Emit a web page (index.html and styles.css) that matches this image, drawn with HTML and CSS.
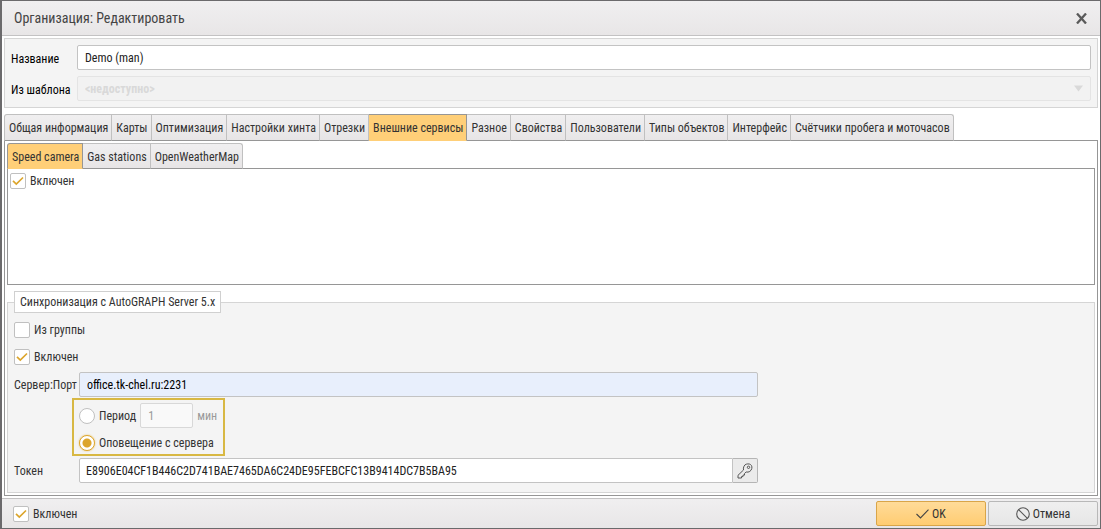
FILE: index.html
```html
<!DOCTYPE html>
<html lang="ru">
<head>
<meta charset="utf-8">
<title>Организация: Редактировать</title>
<link rel="stylesheet" href="styles.css">
</head>
<body>
<form class="dialog">
  <header class="dialog-header">
    <h1 class="dialog-title">Организация: Редактировать</h1>
    <button type="button" class="close" aria-label="Закрыть">
      <svg width="11" height="11" viewBox="0 0 11 11"><path d="M1 0.5 10 10.5M10 0.5 1 10.5" stroke="#5a5a5a" stroke-width="2.300" fill="none"/></svg>
    </button>
  </header>

  <main class="dialog-body">
    <section class="general">
      <label for="name">Название</label>
      <input class="field" id="name" type="text" value="Demo (man)">
      <label for="template">Из шаблона</label>
      <div class="select-wrap">
        <select class="field select" id="template" disabled><option>&lt;недоступно&gt;</option></select>
        <svg class="arrow" width="9" height="7" viewBox="0 0 9 7"><path d="M0 0.5h9L4.500 6.500z" fill="#d9d9d9"/></svg>
      </div>
    </section>

    <nav class="tabs">
      <button type="button" class="tab">Общая информация</button>
      <button type="button" class="tab">Карты</button>
      <button type="button" class="tab">Оптимизация</button>
      <button type="button" class="tab">Настройки хинта</button>
      <button type="button" class="tab">Отрезки</button>
      <button type="button" class="tab active">Внешние сервисы</button>
      <button type="button" class="tab">Разное</button>
      <button type="button" class="tab">Свойства</button>
      <button type="button" class="tab">Пользователи</button>
      <button type="button" class="tab">Типы объектов</button>
      <button type="button" class="tab">Интерфейс</button>
      <button type="button" class="tab">Счётчики пробега и моточасов</button>
    </nav>

    <section class="pane">
      <nav class="tabs inner">
        <button type="button" class="tab active">Speed camera</button>
        <button type="button" class="tab">Gas stations</button>
        <button type="button" class="tab">OpenWeatherMap</button>
      </nav>
      <div class="service">
        <label class="check"><input type="checkbox" checked>Включен</label>
      </div>

      <fieldset class="sync">
        <legend>Синхронизация с AutoGRAPH Server 5.x</legend>
        <label class="check"><input type="checkbox">Из группы</label>
        <label class="check"><input type="checkbox" checked>Включен</label>
        <div class="row">
          <label for="server">Сервер:Порт</label>
          <input class="field autofill" id="server" type="text" value="office.tk-chel.ru:2231">
        </div>
        <div class="mode">
          <div class="mode-row">
            <label class="radio"><input type="radio" name="mode">Период</label>
            <input class="field minutes" type="text" value="1" aria-label="Период, мин" disabled>
            <span class="unit">мин</span>
          </div>
          <label class="radio"><input type="radio" name="mode" checked>Оповещение с сервера</label>
        </div>
        <div class="row">
          <label for="token">Токен</label>
          <div class="token">
            <input class="field" id="token" type="text" value="E8906E04CF1B446C2D741BAE7465DA6C24DE95FEBCFC13B9414DC7B5BA95">
            <button type="button" class="key" aria-label="Создать токен">
              <svg width="16" height="16" viewBox="0 0 16 16" fill="none" stroke="#555" stroke-linejoin="round"><path d="M7 3.200C8 1 10.500 .7 12.300 1c2 .5 3 2.300 2.500 4.400-.5 2.600-3 4.300-5.700 3.600L7.500 10.500v1.600H6v1.500H4.500V15H1v-2.700L6.500 7C6.200 5.800 6.400 4.400 7 3.200z"/><circle cx="11.500" cy="4.300" r="1.200"/></svg>
            </button>
          </div>
        </div>
      </fieldset>
    </section>
  </main>

  <footer class="dialog-footer">
    <label class="check"><input type="checkbox" checked>Включен</label>
    <div class="actions">
      <button type="submit" class="button primary">
        <svg width="13" height="10" viewBox="0 0 13 10"><path d="M.5 5 4.500 9 12.500 .7" fill="none" stroke="#444" stroke-width="1.100"/></svg>OK
      </button>
      <button type="button" class="button">
        <svg width="14" height="14" viewBox="0 0 14 14" fill="none" stroke="#555" stroke-width="1.100"><circle cx="7" cy="7" r="6.300"/><path d="M2.600 2.600 11.400 11.400"/></svg>Отмена
      </button>
    </div>
  </footer>
</form>
</body>
</html>
```
FILE: styles.css
```css
* {
  box-sizing: border-box;
}

body {
  margin: 0;
  font: 12px/16px "Roboto Condensed", Roboto, "Liberation Sans", sans-serif;
  color: #333;
}

button,
input,
select {
  font: inherit;
  color: inherit;
  margin: 0;
}

svg {
  flex: none;
}

.dialog {
  display: flex;
  flex-direction: column;
  min-height: 100vh;
  border: 1px solid #6b6a6c;
  border-left-width: 2px;
  background: #fff;
}

.dialog-header {
  display: flex;
  align-items: center;
  justify-content: space-between;
  height: 35px;
  padding: 0 13px 0 12px;
  background: linear-gradient(#f0eff0, #e8e6e7);
  border-bottom: 1px solid #c3c2c3;
}

.dialog-title {
  margin: 0;
  font-size: 14px;
  line-height: 20px;
  font-weight: 400;
  color: #444;
}

.close {
  display: flex;
  padding: 0;
  border: 0;
  background: none;
}

.dialog-body {
  flex: 1;
  display: flex;
  flex-direction: column;
  padding: 2px;
}

.general {
  display: grid;
  grid-template-columns: 66px 1fr;
  align-items: center;
  row-gap: 6px;
  padding: 6px;
  margin-bottom: 6px;
  border: 1px solid #d5d5d5;
  background: #f4f4f4;
  color: #000;
}

.general label {
  padding-top: 2px;
}

.field {
  width: 100%;
  height: 25px;
  padding: 1px 7px 0;
  border: 1px solid #c3c3c3;
  border-radius: 2px;
  background: #fff;
  color: #222;
}

.select-wrap {
  position: relative;
  display: flex;
}

.select {
  appearance: none;
  border-color: #e4e4e4;
  background: #f2f2f2;
  color: #d9d9d9;
  font-weight: 700;
  opacity: 1;
}

.arrow {
  position: absolute;
  right: 8px;
  top: 9px;
}

.tabs {
  display: flex;
  position: relative;
  margin-bottom: -1px;
}

.tab {
  height: 27px;
  padding: 0 3px 0 4px;
  border: 1px solid #c0c0c0;
  border-bottom-color: #969696;
  border-left-width: 0;
  background: linear-gradient(#f0eff0, #e7e5e6);
  white-space: nowrap;
}

.inner .tab {
  height: 26px;
  padding-top: 2px;
}

.tab:first-child {
  border-left-width: 1px;
  border-top-left-radius: 3px;
}

.tab:last-child {
  border-top-right-radius: 3px;
}

.tab.active {
  background: #ffcf78;
  border-color: #969696;
  border-bottom-color: #ffcf78;
}

.pane {
  flex: 1;
  display: flex;
  flex-direction: column;
  padding: 2px;
  border: 1px solid #969696;
}

.service {
  flex: 1;
  min-height: 60px;
  padding: 4px 2px;
  margin-bottom: 6px;
  border: 1px solid #969696;
}

.check,
.radio {
  display: flex;
  align-items: center;
  gap: 4px;
}

.check input {
  appearance: none;
  flex: none;
  width: 16px;
  height: 16px;
  border: 1px solid #c0c0c0;
  border-radius: 2px;
  background: #fff;
}

.check input:checked {
  background: #fff url("data:image/svg+xml,%3Csvg xmlns='http://www.w3.org/2000/svg' viewBox='0 0 14 14'%3E%3Cpath d='M2 6.800 5.300 10 12 3.500' fill='none' stroke='%23dca52c' stroke-width='1.700'/%3E%3C/svg%3E") center / 14px 14px no-repeat;
}

.sync {
  display: flex;
  flex-direction: column;
  margin: 0;
  padding: 9px 6px 9px;
  min-width: 0;
  border: 1px solid #d5d5d5;
  background: #f4f4f4;
}

.sync legend {
  padding: 2px 5px;
  border: 1px solid #d0d0d0;
  background: #fff;
}

.sync .check {
  margin-bottom: 11px;
}

.sync .check + .row {
  margin-top: -4px;
}

.row {
  display: grid;
  grid-template-columns: 65px minmax(0, 679px);
  align-items: center;
}

.autofill {
  background: #e8effc;
  color: #000;
}

.mode {
  align-self: flex-start;
  margin: 1px 0 2px 58px;
  padding: 3px 6px 3px 5px;
  border: 2px solid #d8b843;
}

.mode-row {
  display: flex;
  align-items: center;
  gap: 4px;
  margin-bottom: 7px;
}

.radio input {
  appearance: none;
  flex: none;
  width: 16px;
  height: 16px;
  border: 1px solid #c0c0c0;
  border-radius: 50%;
  background: #fff;
}

.radio input:checked {
  border-color: #dca52c;
  background: #fff radial-gradient(circle, #dca52c 3px, #dca52c 4px, #fff 5px);
  box-shadow: 0 0 2px #e8c068;
}

.minutes {
  width: 53px;
  border-color: #d8d8d8;
  background: #f9f9f9;
  color: #999;
}

.unit {
  color: #999;
}

.token {
  display: flex;
}

.token .field {
  flex: 1;
  min-width: 0;
  padding: 0 6px;
  border-radius: 2px 0 0 2px;
}

.key {
  display: flex;
  align-items: center;
  justify-content: center;
  width: 25px;
  padding: 0;
  border: 1px solid #b5b5b5;
  border-left-width: 0;
  border-radius: 0 2px 2px 0;
  background: #ebebeb;
}

.dialog-footer {
  display: flex;
  align-items: center;
  justify-content: space-between;
  height: 30px;
  padding: 0 2px 0 11px;
  border-top: 1px solid #c3c2c3;
  background: linear-gradient(#f0eff0, #e8e6e7);
}

.actions {
  display: flex;
  gap: 2px;
}

.button {
  display: flex;
  align-items: center;
  justify-content: center;
  gap: 3px;
  width: 110px;
  height: 25px;
  padding: 0;
  border: 1px solid #b8b8b8;
  border-radius: 2px;
  background: linear-gradient(#efefef, #e6e6e6);
}

.button.primary {
  border-color: #d9a549;
  background: linear-gradient(#ffdb99, #ffcc72);
}
```
